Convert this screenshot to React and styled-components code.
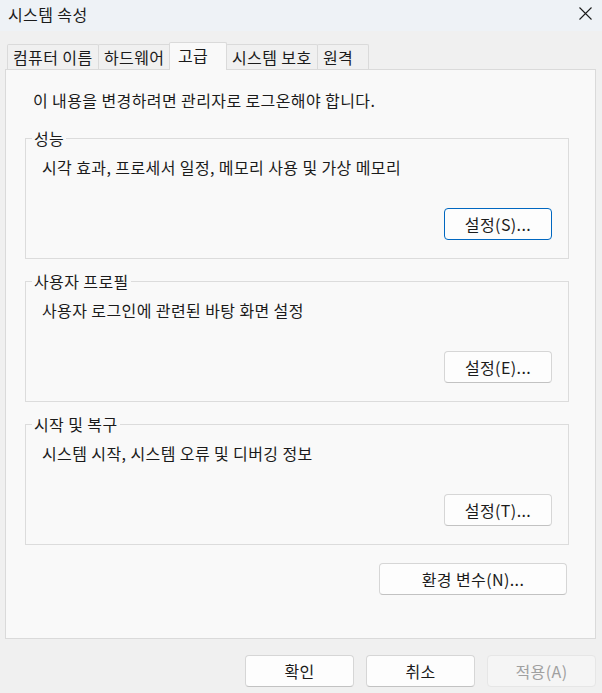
import React, { useState } from "react";
import styled, { createGlobalStyle } from "styled-components";

const GlobalStyle = createGlobalStyle`
  html, body {
    margin: 0;
    padding: 0;
    background: #f0f0f0;
  }
  body {
    font-family: "Noto Sans CJK KR", "Noto Sans", sans-serif;
    font-size: 16px;
    letter-spacing: 0.4px;
    line-height: 20px;
    color: #1b1b1b;
  }
  * {
    box-sizing: border-box;
  }
`;

const Window = styled.div`
  display: flex;
  flex-direction: column;
  width: 602px;
  height: 693px;
  background: #f0f0f0;
`;

const TitleBar = styled.div`
  display: flex;
  align-items: center;
  justify-content: space-between;
  height: 32px;
  padding: 0 9px 0 8px;
  background: #eef2f6;
`;

const Title = styled.div`
  margin-top: -4px;
`;

const CloseButton = styled.button`
  display: flex;
  align-items: center;
  justify-content: center;
  width: 16px;
  height: 16px;
  padding: 0;
  margin-top: -4px;
  border: none;
  background: none;
  color: #1b1b1b;
`;

const Body = styled.div`
  display: flex;
  flex-direction: column;
  flex: 1;
  padding: 11px 6px 0 5px;
`;

const TabStrip = styled.div`
  display: flex;
  align-items: flex-end;
  padding-left: 2px;
  position: relative;
  z-index: 1;
`;

const Tab = styled.div`
  display: flex;
  align-items: center;
  flex: none;
  width: ${(p) => p.$width}px;
  height: ${(p) => (p.$active ? "28px" : "25px")};
  padding: ${(p) => (p.$active ? "0 0 3px 8px" : "0 0 0 5px")};
  margin: ${(p) => (p.$active ? "0 0 -1px -2px" : "0 0 0 -1px")};
  background: ${(p) => (p.$active ? "#f9f9f9" : "#f0f0f0")};
  border: 1px solid #dadada;
  border-bottom: none;
  border-radius: 2px 2px 0 0;
  white-space: nowrap;
  position: relative;
  z-index: ${(p) => (p.$active ? 2 : 1)};

  &:first-child {
    margin-left: 0;
  }
`;

const Panel = styled.div`
  display: flex;
  flex-direction: column;
  height: 570px;
  padding: 20px 26px 0 19px;
  background: #f9f9f9;
  border: 1px solid #dadada;
`;

const Notice = styled.div`
  padding-left: 8px;
  margin-bottom: 18px;
`;

const Group = styled.fieldset`
  margin: 0 0 12px 0;
  padding: 0 16px 18px 16px;
  border: 1px solid #dcdcdc;
  min-width: 0;
`;

const Legend = styled.legend`
  margin-left: -10px;
  padding: 0 2px;
`;

const GroupText = styled.div`
  margin-top: 9px;
`;

const ButtonRow = styled.div`
  display: flex;
  justify-content: flex-end;
  gap: 12px;
  margin-top: ${(p) => p.$top || "0"};
  padding-right: ${(p) => p.$right || "0"};
`;

const Button = styled.button`
  width: ${(p) => p.$width || "108px"};
  height: 32px;
  padding: 0;
  font-family: inherit;
  font-size: 16px;
  letter-spacing: 0.4px;
  color: ${(p) => (p.disabled ? "#a0a0a0" : "#1b1b1b")};
  background: ${(p) => (p.disabled ? "#f5f5f5" : "#fdfdfd")};
  border: 1px solid
    ${(p) => (p.$primary ? "#0067c0" : p.disabled ? "#e6e6e6" : "#d6d6d6")};
  border-bottom-color: ${(p) =>
    p.$primary ? "#0067c0" : p.disabled ? "#e6e6e6" : "#c2c2c2"};
  border-radius: 4px;
`;

const Footer = styled.div`
  display: flex;
  justify-content: flex-end;
  gap: 12px;
  padding: 16px 0 6px 0;
`;

const tabs = [
  { name: "컴퓨터 이름", width: 92 },
  { name: "하드웨어", width: 73 },
  { name: "고급", width: 58 },
  { name: "시스템 보호", width: 92 },
  { name: "원격", width: 52 },
];

const groups = [
  {
    title: "성능",
    text: "시각 효과, 프로세서 일정, 메모리 사용 및 가상 메모리",
    button: "설정(S)...",
    primary: true,
  },
  {
    title: "사용자 프로필",
    text: "사용자 로그인에 관련된 바탕 화면 설정",
    button: "설정(E)...",
  },
  {
    title: "시작 및 복구",
    text: "시스템 시작, 시스템 오류 및 디버깅 정보",
    button: "설정(T)...",
  },
];

export default function App() {
  const [active, setActive] = useState(2);

  return (
    <Window>
      <GlobalStyle />
      <TitleBar>
        <Title>시스템 속성</Title>
        <CloseButton aria-label="닫기">
          <svg width="13" height="13" viewBox="0 0 13 13">
            <path
              d="M0.5 0.5 L12.5 12.5 M12.5 0.5 L0.5 12.5"
              stroke="currentColor"
              strokeWidth="1.1"
              fill="none"
            />
          </svg>
        </CloseButton>
      </TitleBar>
      <Body>
        <TabStrip>
          {tabs.map((t, i) => (
            <Tab
              key={t.name}
              $width={t.width}
              $active={i === active}
              onClick={() => setActive(i)}
            >
              {t.name}
            </Tab>
          ))}
        </TabStrip>
        <Panel>
          <Notice>이 내용을 변경하려면 관리자로 로그온해야 합니다.</Notice>
          {groups.map((g) => (
            <Group key={g.title}>
              <Legend>{g.title}</Legend>
              <GroupText>{g.text}</GroupText>
              <ButtonRow $top="31px">
                <Button $primary={g.primary}>{g.button}</Button>
              </ButtonRow>
            </Group>
          ))}
          <ButtonRow $top="6px" $right="2px">
            <Button $width="188px">환경 변수(N)...</Button>
          </ButtonRow>
        </Panel>
        <Footer>
          <Button $width="109px">확인</Button>
          <Button $width="109px">취소</Button>
          <Button $width="109px" disabled>
            적용(A)
          </Button>
        </Footer>
      </Body>
    </Window>
  );
}
